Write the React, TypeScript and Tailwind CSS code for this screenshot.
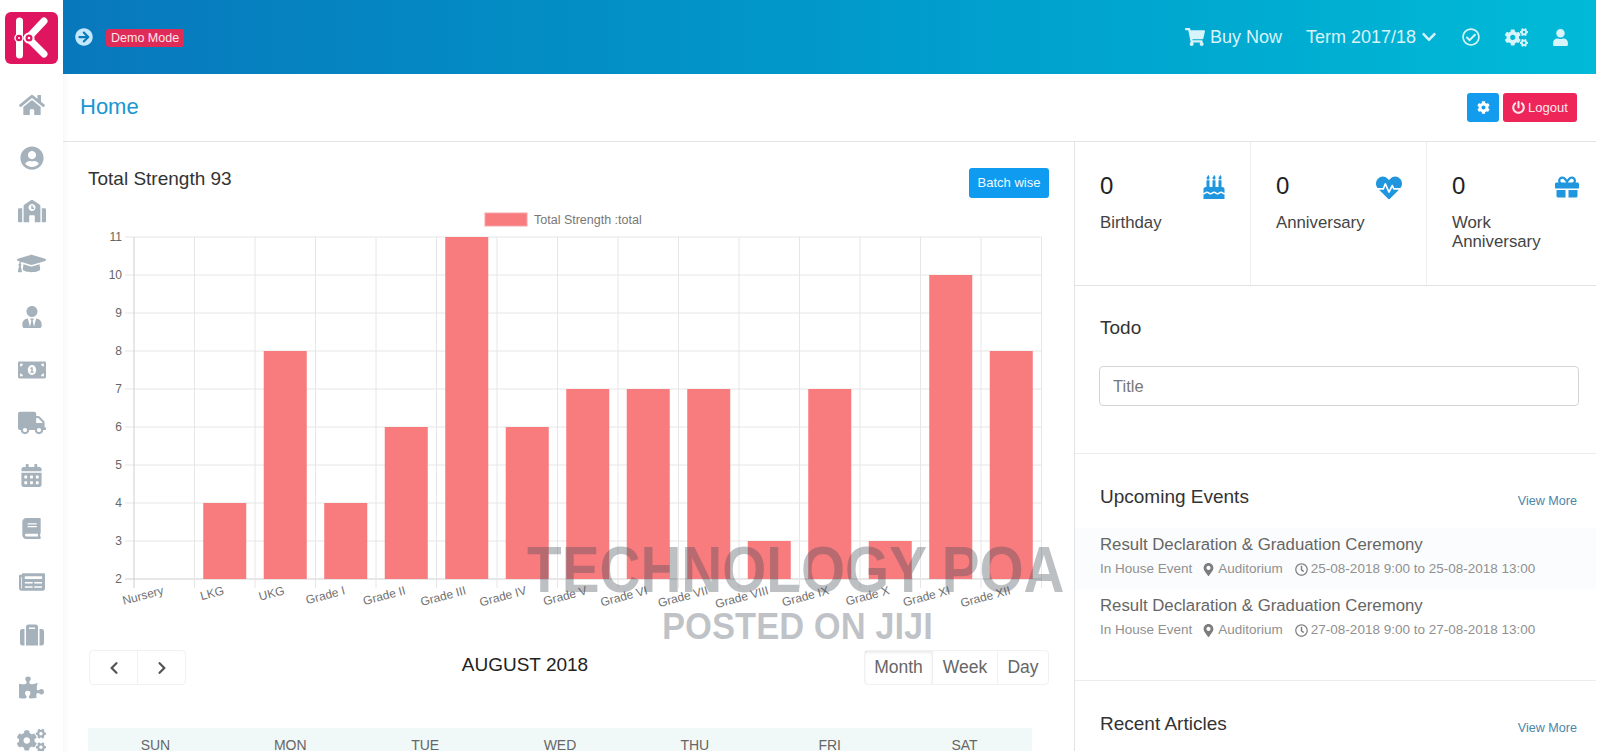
import React from "react";
import {
  FaHome, FaUserCircle, FaSchool, FaGraduationCap, FaUserTie, FaMoneyBillAlt, FaTruck, FaCalendarAlt, FaBook,
  FaNewspaper, FaSuitcase, FaPuzzlePiece, FaCogs, FaArrowCircleRight, FaShoppingCart, FaChevronDown, FaRegCheckCircle,
  FaUser, FaCog, FaPowerOff, FaBirthdayCake, FaHeartbeat, FaGift, FaMapMarkerAlt, FaRegClock, FaChevronLeft, FaChevronRight,
} from "react-icons/fa";

const sideIcons = [
  { I: FaHome, s: 26 }, { I: FaUserCircle, s: 24 }, { I: FaSchool, s: 28 }, { I: FaGraduationCap, s: 29 },
  { I: FaUserTie, s: 22 }, { I: FaMoneyBillAlt, s: 28 }, { I: FaTruck, s: 28 }, { I: FaCalendarAlt, s: 23 },
  { I: FaBook, s: 21 }, { I: FaNewspaper, s: 26 }, { I: FaSuitcase, s: 24 }, { I: FaPuzzlePiece, s: 25 }, { I: FaCogs, s: 29 },
];

const labels = ["Nursery", "LKG", "UKG", "Grade I", "Grade II", "Grade III", "Grade IV", "Grade V", "Grade VI", "Grade VII", "Grade VIII", "Grade IX", "Grade X", "Grade XI", "Grade XII"];
const values = [2, 4, 8, 4, 6, 11, 6, 7, 7, 7, 3, 7, 3, 10, 8];

function Logo() {
  return (
    <svg width="53" height="53" viewBox="0 0 53 53">
      <rect x="0" y="0" width="53" height="52" rx="6" fill="#e0155f" />
      <line x1="14.5" y1="9" x2="14.5" y2="43" stroke="#fff" strokeWidth="7" strokeLinecap="round" />
      <line x1="23" y1="26" x2="39" y2="9" stroke="#fff" strokeWidth="7" strokeLinecap="round" />
      <line x1="23" y1="26" x2="39" y2="42" stroke="#fff" strokeWidth="7" strokeLinecap="round" />
      <circle cx="14" cy="26" r="4" fill="#e0155f" stroke="#fff" strokeWidth="1.5" />
      <circle cx="24" cy="26" r="4.5" fill="#e0155f" stroke="#fff" strokeWidth="2" />
      <circle cx="14" cy="26" r="1" fill="#fff" />
      <circle cx="24" cy="26" r="1.3" fill="#fff" />
    </svg>
  );
}

function Chart() {
  const left = 134, step = 60.5, top = 236, unit = 38;
  const yOf = (v: number) => top + (11 - v) * unit;
  return (
    <svg viewBox="88 205 961 420" width="961" height="420" className="block" style={{ fontFamily: '"Liberation Sans", Arial, sans-serif' }}>
      <rect x="485" y="212" width="42" height="13" fill="#f87b7e" stroke="#f8a5a8" />
      <text x="534" y="223" fontSize="12.5" fill="#777">Total Strength :total</text>
      {[11, 10, 9, 8, 7, 6, 5, 4, 3, 2].map((v) => (
        <g key={v}>
          <line x1="125" x2={left + step * 15} y1={yOf(v)} y2={yOf(v)} stroke={v === 2 ? "#cfcfcf" : "#e6e6e6"} />
          <text x="122" y={yOf(v) + 4} textAnchor="end" fontSize="12" fill="#666">{v}</text>
        </g>
      ))}
      {Array.from({ length: 16 }).map((_, i) => (
        <line key={i} x1={left + step * i} x2={left + step * i} y1={top} y2={587} stroke={i === 0 ? "#cfcfcf" : "#e6e6e6"} />
      ))}
      {values.map((v, i) => v > 2 && (
        <rect key={i} x={left + step * i + 30.25 - 21.5} y={yOf(v)} width="43" height={yOf(2) - yOf(v)} fill="#f87b7e" />
      ))}
      {labels.map((l, i) => (
        <text key={l} textAnchor="end" fontSize="12" fill="#707070" transform={`translate(${left + step * i + 30.25} 593) rotate(-15)`}>{l}</text>
      ))}
    </svg>
  );
}

function Stat({ label, I, s, border }: { label: React.ReactNode; I: any; s: number; border?: boolean }) {
  return (
    <div className={`w-[176px] shrink-0 h-full pl-[25px] pr-[24px] pt-[26px] flex justify-between items-start ${border ? "border-r border-[#efefef]" : ""}`}>
      <div>
        <div className="text-[24px] leading-[36px] text-[#222]">0</div>
        <div className="mt-[10px] text-[16.8px] leading-[18.5px] text-[#444] whitespace-nowrap">{label}</div>
      </div>
      <I size={s} className="text-[#1f96de] mt-[7px] shrink-0" />
    </div>
  );
}

function EventRow({ date, shaded }: { date: string; shaded?: boolean }) {
  return (
    <div className={`pl-[25px] h-[61px] pt-[5px] ${shaded ? "bg-[#fbfcfd]" : ""}`}>
      <div className="text-[16.8px] leading-[24px] text-[#666] whitespace-nowrap">Result Declaration &amp; Graduation Ceremony</div>
      <div className="mt-[2px] flex items-center text-[13.5px] leading-[20px] text-[#909090] whitespace-nowrap">
        <span>In House Event</span>
        <FaMapMarkerAlt size={13} className="ml-[10px] mr-[3px] text-[#7d7d7d]" />
        <span>Auditorium</span>
        <FaRegClock size={13} className="ml-[12px] mr-[3px] text-[#7d7d7d]" />
        <span>{date}</span>
      </div>
    </div>
  );
}

export default function App() {
  return (
    <div className="relative flex h-[751px] w-[1600px] overflow-hidden bg-white" style={{ fontFamily: '"Liberation Sans", Arial, sans-serif' }}>
      <aside className="w-[63px] shrink-0 bg-white flex flex-col items-center">
        <div className="h-[78px] shrink-0 w-full pl-[5px] pt-[12px]"><Logo /></div>
        {sideIcons.map(({ I, s }, i) => (
          <div key={i} className="h-[53px] w-full shrink-0 flex items-center justify-center text-[#a5b2bb]"><I size={s} /></div>
        ))}
      </aside>

      <div className="flex-1 flex flex-col min-w-0 pr-[4px]">
        <header className="h-[74px] shrink-0 bg-gradient-to-r from-[#0878bc] to-[#01bad7] flex items-center text-[#d8f4fb]">
          <FaArrowCircleRight size={18} className="ml-[12px] text-[#c4e8fb]" />
          <span className="ml-[13px] mt-[1px] bg-[#df2b57] text-[#ffe5ea] text-[12.5px] leading-[18px] px-[5px] rounded-[3px]">Demo Mode</span>
          <div className="ml-auto flex items-center pr-[27px]">
            <FaShoppingCart size={20} />
            <span className="ml-[5px] text-[18px]">Buy Now</span>
            <span className="ml-[24px] text-[18px]">Term 2017/18</span>
            <FaChevronDown size={16} className="ml-[5px]" />
            <FaRegCheckCircle size={18} className="ml-[25px]" />
            <FaCogs size={23} className="ml-[25px]" />
            <FaUser size={17} className="ml-[24px]" />
          </div>
        </header>

        <div className="h-[68px] shrink-0 border-b border-[#e3e3e3] flex items-center pl-[17px] pr-[19px] shadow-[inset_6px_0_6px_-5px_rgba(0,0,0,0.05)]">
          <h1 className="text-[22px] text-[#1a96d3] -mt-[2px]">Home</h1>
          <button className="ml-auto w-[32px] h-[29px] rounded-[3px] bg-[#139ced] text-white flex items-center justify-center"><FaCog size={13} /></button>
          <button className="ml-[4px] w-[74px] h-[29px] rounded-[3px] bg-[#ee2558] text-[#ffe8ed] text-[13px] flex items-center justify-center"><FaPowerOff size={13} className="mr-[3px]" />Logout</button>
        </div>

        <div className="flex-1 flex min-h-0 overflow-hidden">
          <section className="w-[1011px] shrink-0 pl-[25px] pr-[25px] shadow-[inset_6px_0_6px_-5px_rgba(0,0,0,0.05)]">
            <div className="flex items-start justify-between pt-[26px] h-[64px]">
              <h2 className="text-[19px] leading-[22px] text-[#333]">Total Strength 93</h2>
              <button className="h-[30px] w-[80px] rounded-[3px] bg-[#0e9bf0] text-[#f0faff] text-[13px]">Batch wise</button>
            </div>
            <Chart />
            <div className="flex items-center justify-between mt-[24px] h-[35px]">
              <div className="flex h-[35px] w-[97px] ml-[1px] rounded-[4px] border border-[#f1f1f1] text-[#555]">
                <div className="flex-1 flex items-center justify-center border-r border-[#f1f1f1]"><FaChevronLeft size={14} /></div>
                <div className="flex-1 flex items-center justify-center"><FaChevronRight size={14} /></div>
              </div>
              <div className="text-[19px] leading-[30px] -mt-[6px] text-[#222]">AUGUST 2018</div>
              <div className="flex h-[35px] w-[185px] rounded-[4px] border border-[#f1f1f1] text-[17.5px] text-[#666]">
                <div className="w-[68px] flex items-center justify-center border-r border-[#eee] shadow-[inset_0_2px_3px_rgba(0,0,0,0.08)]">Month</div>
                <div className="w-[65px] flex items-center justify-center border-r border-[#f1f1f1]">Week</div>
                <div className="flex-1 flex items-center justify-center">Day</div>
              </div>
            </div>
            <div className="mt-[43px] w-[944px] grid grid-cols-7 bg-[#f1f9f8] h-[40px] pt-[9px] text-[14px] leading-[16px] text-[#666] text-center">
              {["SUN", "MON", "TUE", "WED", "THU", "FRI", "SAT"].map((d) => <div key={d}>{d}</div>)}
            </div>
          </section>

          <section className="flex-1 border-l border-[#e3e3e3] min-w-0">
            <div className="h-[144px] flex border-b border-[#e3e3e3]">
              <Stat label="Birthday" I={FaBirthdayCake} s={24} border />
              <Stat label="Anniversary" I={FaHeartbeat} s={26} border />
              <Stat label={<>Work<br />Anniversary</>} I={FaGift} s={24} />
            </div>
            <div className="h-[168px] border-b border-[#ececec] pl-[25px] pr-[17px] pt-[29px]">
              <h3 className="text-[19px] leading-[26px] text-[#333]">Todo</h3>
              <div className="mt-[25px] -ml-[1px] h-[40px] border border-[#d5d5d5] rounded-[4px] flex items-center pl-[13px] text-[16.5px] text-[#777]">Title</div>
            </div>
            <div className="h-[227px] border-b border-[#ececec] pt-[30px]">
              <div className="flex justify-between items-end pl-[25px] pr-[19px] h-[26px]">
                <h3 className="text-[19px] leading-[26px] text-[#333]">Upcoming Events</h3>
                <a className="text-[12.6px] leading-[20px] -mb-[1px] text-[#4a86ab]">View More</a>
              </div>
              <div className="mt-[18px]">
                <EventRow shaded date="25-08-2018 9:00 to 25-08-2018 13:00" />
                <EventRow date="27-08-2018 9:00 to 27-08-2018 13:00" />
              </div>
            </div>
            <div className="flex justify-between items-end pl-[25px] pr-[19px] h-[26px] mt-[30px]">
              <h3 className="text-[19px] leading-[26px] text-[#333]">Recent Articles</h3>
              <a className="text-[12.6px] leading-[20px] -mb-[1px] text-[#4a86ab]">View More</a>
            </div>
          </section>
        </div>
      </div>

      <div className="absolute left-[527px] top-[530px] font-bold text-[56.7px] leading-[70px] scale-y-[1.15] origin-top whitespace-nowrap text-[rgba(70,80,90,0.36)] pointer-events-none">TECHNOLOGY POA</div>
      <div className="absolute left-[662px] top-[599px] font-bold text-[34.6px] leading-[50px] scale-y-[1.08] origin-top whitespace-nowrap text-[rgba(70,80,90,0.34)] pointer-events-none">POSTED ON JIJI</div>
    </div>
  );
}
